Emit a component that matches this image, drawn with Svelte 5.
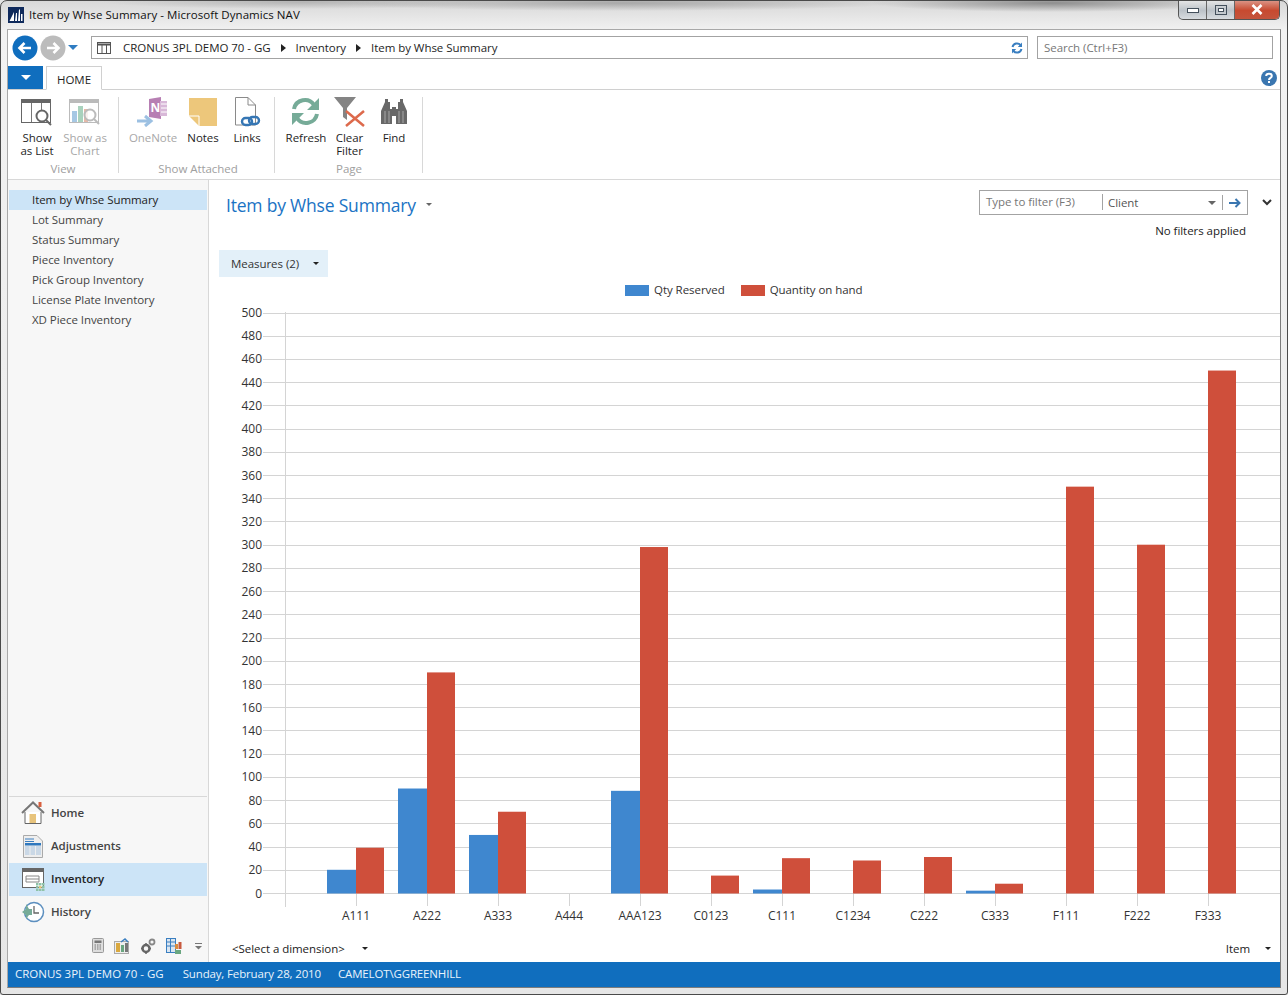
<script>
  const cats = [
    ['A111', 20, 39], ['A222', 90, 190], ['A333', 50, 70], ['A444', 0, 0], ['AAA123', 88, 298],
    ['C0123', 0, 15], ['C111', 3, 30], ['C1234', 0, 28], ['C222', 0, 31], ['C333', 2, 8],
    ['F111', 0, 350], ['F222', 0, 300], ['F333', 0, 450]
  ];
  const ticks = Array.from({ length: 26 }, (_, i) => i * 20);
  const y = (v) => 893 - v * 1.161;
  const cx = (i) => 356 + i * 71;
  const views = ['Item by Whse Summary', 'Lot Summary', 'Status Summary', 'Piece Inventory', 'Pick Group Inventory', 'License Plate Inventory', 'XD Piece Inventory'];
</script>

<div class="window">
  <div class="glass" aria-hidden="true"></div>
  <header class="titlebar">
    <svg class="logo" width="16" height="16" viewBox="0 0 16 16">
      <rect width="16" height="16" fill="#0f2a5c" />
      <path d="M1.500 14 L6 5 V14Z M7 14 L8 6 H9 V14Z M10 14 L11 2.500 H12 V14Z M13 14 V7 H14.500 V14Z" fill="#fff" />
    </svg>
    <span class="title">Item by Whse Summary - Microsoft Dynamics NAV</span>
    <div class="controls">
      <div class="ctl">
        <svg width="14" height="8" viewBox="0 0 14 8"><rect x="1.500" y="2.500" width="11" height="4" fill="#fff" stroke="#44505c" /></svg>
      </div>
      <div class="ctl">
        <svg width="12" height="10" viewBox="0 0 12 10"><rect x="0.500" y="0.500" width="11" height="9" fill="none" stroke="#44505c" /><rect x="3.500" y="3.500" width="5" height="3" fill="#fff" stroke="#44505c" /></svg>
      </div>
      <div class="ctl close">
        <svg width="14" height="11" viewBox="0 0 14 11"><path d="M2.500 1 L11.500 10 M11.500 1 L2.500 10" stroke="#fff" stroke-width="2.600" /></svg>
      </div>
    </div>
  </header>

  <div class="client">
    <div class="navrow">
      <svg class="navbtns" width="70" height="26" viewBox="0 0 70 26">
        <circle cx="13" cy="13" r="12.500" fill="#106ebe" />
        <path d="M19 13 H8 M12.500 8 L7.500 13 L12.500 18" fill="none" stroke="#fff" stroke-width="2.600" />
        <circle cx="41" cy="13" r="12.500" fill="#bcbcbc" />
        <path d="M35 13 H46 M41.500 8 L46.500 13 L41.500 18" fill="none" stroke="#fff" stroke-width="2.600" />
        <path d="M56 10 H66 L61 15Z" fill="#2f7cc2" />
      </svg>
      <div class="address">
        <svg width="14" height="12" viewBox="0 0 14 12"><rect x="0.500" y="0.500" width="13" height="11" fill="#fff" stroke="#555" /><path d="M0 2.500 H14" stroke="#555" stroke-width="2" /><path d="M5 3 V12 M9.500 3 V12" stroke="#555" /></svg>
        <span class="crumb first">CRONUS 3PL DEMO 70 - GG</span>
        <i class="sep"></i>
        <span class="crumb">Inventory</span>
        <i class="sep"></i>
        <span class="crumb">Item by Whse Summary</span>
        <svg class="reload" width="12" height="12" viewBox="0 0 12 12"><path d="M1.500 5 A4.600 4.600 0 0 1 9.600 3.200 M10.500 7 A4.600 4.600 0 0 1 2.400 8.800" fill="none" stroke="#3a7fc1" stroke-width="2" /><path d="M11 0.500 V5 H6.800Z M1 11.500 V7 H5.200Z" fill="#3a7fc1" /></svg>
      </div>
      <div class="search">Search (Ctrl+F3)</div>
    </div>

    <div class="tabrow">
      <div class="appbtn"><i class="tri white"></i></div>
      <div class="tab">HOME</div>
      <svg class="help" width="16" height="16" viewBox="0 0 16 16"><circle cx="8" cy="8" r="8" fill="#3a76b0" /><path d="M5.200 6 C5.200 2.900 10.800 2.900 10.800 6 C10.800 8 8 7.800 8 10" fill="none" stroke="#fff" stroke-width="2" /><rect x="7" y="11" width="2" height="2" fill="#fff" /></svg>
    </div>

    <div class="ribbon">
      <section class="group g1">
        <div class="btns">
          <div class="rb w48">
            <svg width="32" height="30" viewBox="0 0 32 30"><rect x="0.500" y="2.500" width="29" height="23" fill="#fff" stroke="#666" /><rect y="2" width="30" height="4" fill="#666" /><path d="M10.500 6 V25 M20.500 6 V25" stroke="#777" /><circle cx="21" cy="19" r="5.500" fill="#fff" stroke="#666" stroke-width="2" /><path d="M25 23 L30 28" stroke="#666" stroke-width="2" /></svg>
            <span>Show<br />as List</span>
          </div>
          <div class="rb w48 off">
            <svg width="32" height="30" viewBox="0 0 32 30"><rect x="0.500" y="2.500" width="29" height="23" fill="#fff" stroke="#bbb" /><rect y="2" width="30" height="4" fill="#bbb" /><rect x="3" y="14" width="5" height="11" fill="#a6c8e4" /><rect x="9" y="9" width="5" height="16" fill="#a9d2bd" /><rect x="15" y="12" width="4" height="13" fill="#e6b9a8" /><circle cx="21" cy="18" r="5.500" fill="#fff" fill-opacity="0.800" stroke="#bbb" stroke-width="2" /><path d="M25 22 L30 27" stroke="#bbb" stroke-width="2" /></svg>
            <span>Show as<br />Chart</span>
          </div>
        </div>
        <div class="glabel">View</div>
      </section>
      <section class="group g2">
        <div class="btns">
          <div class="rb w52 off">
            <svg width="32" height="30" viewBox="0 0 32 30"><path d="M12 2 L24 0 V22 L12 20Z" fill="#b77fb3" /><rect x="23" y="4" width="7" height="15" fill="#d8b8d8" /><path d="M24 7 H30 M24 11 H30 M24 15 H30" stroke="#fff" /><text class="onenote" x="13.500" y="15">N</text><path d="M0 24 H12 M8 19 L14 24 L8 29" fill="none" stroke="#9cc0e2" stroke-width="3" /></svg>
            <span>OneNote</span>
          </div>
          <div class="rb w48">
            <svg width="32" height="30" viewBox="0 0 32 30"><path d="M2 1 H30 V29 H12 L2 19Z" fill="#edc77b" /><path d="M2 19 H12 V29" fill="none" stroke="#fff" /></svg>
            <span>Notes</span>
          </div>
          <div class="rb w40">
            <svg width="32" height="30" viewBox="0 0 32 30"><path d="M4.500 0.500 H17 L24.500 8 V28 H4.500Z" fill="#fff" stroke="#8a8a8a" /><path d="M17 0.500 V8 H24.500" fill="none" stroke="#8a8a8a" /><rect x="11" y="21" width="10" height="7" rx="3.500" fill="none" stroke="#3576b4" stroke-width="2.400" /><rect x="18" y="20" width="10" height="7" rx="3.500" fill="none" stroke="#3576b4" stroke-width="2.400" /></svg>
            <span>Links</span>
          </div>
        </div>
        <div class="glabel">Show Attached</div>
      </section>
      <section class="group g3">
        <div class="btns">
          <div class="rb w50">
            <svg width="32" height="30" viewBox="0 0 32 30"><path d="M4 12 A11 11 0 0 1 24 8 M27 17 A11 11 0 0 1 7 21" fill="none" stroke="#76ab98" stroke-width="4" /><path d="M29 1 V13 H17Z M2 28 V16 H14Z" fill="#76ab98" /></svg>
            <span>Refresh</span>
          </div>
          <div class="rb w37">
            <svg width="32" height="30" viewBox="0 0 32 30"><path d="M0 0 H22 L13 11 V23 L9 20 V11Z" fill="#848484" /><path d="M12 29 L30 14 M12 14 L30 29" stroke="#dd6a4c" stroke-width="2.500" /></svg>
            <span>Clear<br />Filter</span>
          </div>
          <div class="rb w52">
            <svg width="32" height="30" viewBox="0 0 32 30"><path d="M7 2 H10 V5 H12 V12 H14 V10 H18 V12 H20 V5 H22 V2 H25 V5 L29 14 V27 H18 V19 H14 V27 H3 V14 L7 5Z" fill="#686868" /><path d="M7 14 V26 M25 14 V26 M11 14 V26 M21 14 V26" stroke="#a8a8a8" /></svg>
            <span>Find</span>
          </div>
        </div>
        <div class="glabel">Page</div>
      </section>
    </div>

    <div class="body">
      <aside class="side">
        <ul class="views">
          {#each views as v, i}
            <li class:sel={i === 0}>{v}</li>
          {/each}
        </ul>
        <nav class="areas">
          <div class="area">
            <svg width="24" height="24" viewBox="0 0 24 24"><path d="M1 12 L12 1.500 L23 12" fill="none" stroke="#777" stroke-width="2" /><path d="M4 11 V22.500 H20 V11" fill="#fff" stroke="#666" /><rect x="8.500" y="13" width="6.500" height="9" fill="#e8c47c" /><rect x="17.500" y="1" width="3" height="5" fill="#d8603f" /></svg>
            <span>Home</span>
          </div>
          <div class="area">
            <svg width="24" height="24" viewBox="0 0 24 24"><path d="M2.500 1.500 H16 L21.500 7 V23.500 H2.500Z" fill="#eee" stroke="#aaa" /><path d="M4 5 H13 M4 7.500 H13" stroke="#3a7fc1" /><rect x="4" y="9" width="16" height="2.500" fill="#2f78be" /><rect x="4" y="12" width="4.500" height="9" fill="#cad8e6" /><rect x="9.500" y="12" width="4.500" height="9" fill="#cad8e6" /><rect x="15" y="12" width="5" height="9" fill="#cad8e6" /></svg>
            <span>Adjustments</span>
          </div>
          <div class="area sel">
            <svg width="24" height="24" viewBox="0 0 24 24"><rect x="1.500" y="1.500" width="21" height="19" fill="#fff" stroke="#666" /><rect x="1" y="1" width="22" height="4" fill="#666" /><path d="M5 9 H18 V15 H5Z M5 12 H18" fill="none" stroke="#888" /><g fill="#8fc2a8"><rect x="15" y="16" width="2.500" height="2.500" /><rect x="18" y="16" width="2.500" height="2.500" /><rect x="21" y="16" width="2.500" height="2.500" /><rect x="15" y="19" width="2.500" height="2.500" /><rect x="18" y="19" width="2.500" height="2.500" fill="#e8c47c" /><rect x="21" y="19" width="2.500" height="2.500" /><rect x="15" y="22" width="2.500" height="2" /><rect x="18" y="22" width="2.500" height="2" /><rect x="21" y="22" width="2.500" height="2" /></g></svg>
            <span>Inventory</span>
          </div>
          <div class="area">
            <svg width="24" height="24" viewBox="0 0 24 24"><circle cx="13" cy="12" r="9.500" fill="#fff" stroke="#5c8fbf" stroke-width="1.500" /><path d="M13 6 V13 H18" fill="none" stroke="#666" stroke-width="1.300" /><path d="M5 4 L5 9 L1 12 L5 15 V19 L8 15 H11 V9 H8Z" fill="#76ab98" /></svg>
            <span>History</span>
          </div>
        </nav>
        <div class="tools">
          <svg width="12" height="15" viewBox="0 0 12 15"><rect x="0.500" y="0.500" width="11" height="14" rx="1" fill="#ddd" stroke="#999" /><rect x="2.500" y="2.500" width="7" height="2.500" fill="#777" /><path d="M2.500 7 H9.500 M2.500 9 H9.500 M2.500 11 H9.500" stroke="#777" stroke-dasharray="1.500 1" /></svg>
          <svg width="16" height="16" viewBox="0 0 16 16"><rect x="0.500" y="3.500" width="14" height="12" fill="#eee" stroke="#aaa" /><rect x="2" y="5" width="4" height="9" fill="#d9a83f" /><rect x="7" y="7" width="3" height="7" fill="#6aa680" /><rect x="11" y="5" width="3" height="9" fill="#777" /><path d="M7 4 L11 1 L14 4" fill="none" stroke="#3a7fc1" stroke-width="1.500" /></svg>
          <svg width="16" height="16" viewBox="0 0 16 16"><circle cx="6" cy="10.500" r="3.500" fill="none" stroke="#666" stroke-width="2.500" /><circle cx="12" cy="4" r="2.500" fill="none" stroke="#888" stroke-width="1.800" /><path d="M6 5 V7 M6 14 V16 M1 10.500 H3 M9 10.500 H11" stroke="#666" stroke-width="1.500" /></svg>
          <svg width="16" height="16" viewBox="0 0 16 16"><rect x="0.500" y="0.500" width="9" height="14" fill="#dbe6f1" stroke="#3a7fc1" /><path d="M0 4 H9 M0 8 H9 M4.500 0 V14" stroke="#3a7fc1" /><rect x="9" y="6" width="3" height="5" fill="#d98b3f" /><rect x="12.500" y="4" width="3" height="7" fill="#c85a3f" /><rect x="9" y="12" width="6" height="4" fill="#6aa680" /></svg>
          <svg class="more" width="7" height="8" viewBox="0 0 7 8"><path d="M0 1.500 H7" stroke="#777" /><path d="M0 4 H7 L3.500 7.500Z" fill="#777" /></svg>
        </div>
      </aside>

      <main class="main">
        <div class="head">
          <div class="headrow">
            <h1>Item by Whse Summary</h1>
            <i class="tri gray small"></i>
            <div class="filter">
              <span class="ph">Type to filter (F3)</span>
              <span class="fld">Client</span>
              <i class="tri gray"></i>
              <span class="go">
                <svg width="12" height="10" viewBox="0 0 12 10"><path d="M0 5 H10 M6.500 1 L10.500 5 L6.500 9" fill="none" stroke="#3a76b0" stroke-width="2" /></svg>
              </span>
            </div>
            <svg class="chev" width="10" height="7" viewBox="0 0 10 7"><path d="M1 1 L5 5 L9 1" fill="none" stroke="#333" stroke-width="2" /></svg>
          </div>
          <div class="nofilter">No filters applied</div>
          <div class="measures"><span>Measures (2)</span><i class="tri dark"></i></div>
          <div class="legend">
            <i class="sw blue"></i><span class="lg1">Qty Reserved</span>
            <i class="sw red"></i><span>Quantity on hand</span>
          </div>
        </div>

        <svg class="chart" width="1071" height="635" viewBox="209 300 1071 635">
          {#each ticks as t}
            <line x1="263" x2="1280" y1={Math.round(y(t)) + 0.500} y2={Math.round(y(t)) + 0.500} stroke="#d4d4d4" />
            <text class="axis" x="262" y={y(t) + 4.500} text-anchor="end">{t}</text>
          {/each}
          <line x1="285.500" x2="285.500" y1="312" y2="907" stroke="#d4d4d4" />
          {#each cats as c, i}
            <line x1={cx(i) + 0.500} x2={cx(i) + 0.500} y1="893" y2="906" stroke="#d4d4d4" />
            {#if c[1] > 0}
              <rect class="b" x={cx(i) - 29} y={y(c[1])} width="29" height={893.500 - y(c[1])} />
            {/if}
            {#if c[2] > 0}
              <rect class="r" x={cx(i)} y={y(c[2])} width="28" height={893.500 - y(c[2])} />
            {/if}
            <text class="axis" x={cx(i)} y="920" text-anchor="middle">{c[0]}</text>
          {/each}
        </svg>

        <div class="foot">
          <span class="dim">&lt;Select a dimension&gt;</span>
          <i class="tri dark"></i>
          <span class="item">Item</span>
          <i class="tri dark"></i>
        </div>
      </main>
    </div>

    <footer class="status">
      <span class="co">CRONUS 3PL DEMO 70 - GG</span>
      <span>Sunday, February 28, 2010</span>
      <span class="usr">CAMELOT\GGREENHILL</span>
    </footer>
  </div>
</div>

<style>
  :global(body) { margin: 0; overflow: hidden; background: #e4e4e4; }
  * { box-sizing: border-box; }
  .window {
    position: relative;
    width: 1288px;
    height: 995px;
    display: flex;
    flex-direction: column;
    padding: 0 6px 6px 6px;
    background: linear-gradient(#d8d8d8, #f2f2f2 30px, #e6e6e6);
    border: 1px solid #4a4a4a;
    border-radius: 7px 7px 3px 3px;
    font: 11.500px/16px "Open Sans", "Noto Sans", sans-serif;
    letter-spacing: -0.050px;
    color: #1e1e1e;
    overflow: hidden;
  }
  .glass {
    position: absolute;
    inset: 0 0 auto 0;
    height: 28px;
    background:
      radial-gradient(ellipse 180px 9px at 1050px 2px, #8e8e8e, transparent),
      radial-gradient(ellipse 280px 8px at 620px 2px, #a8a8a8, transparent),
      radial-gradient(ellipse 200px 7px at 300px 1px, #b4b4b4, transparent);
  }
  .titlebar { position: relative; height: 28px; flex: none; display: flex; align-items: center; padding: 0 0 0 1px; }
  .logo { flex: none; }
  .title { margin-left: 5px; color: #111; letter-spacing: 0.050px; }
  .controls {
    position: absolute;
    top: -1px;
    right: 1px;
    display: flex;
    height: 20px;
    border: 1px solid #555;
    border-top: 0;
    border-radius: 0 0 5px 5px;
    overflow: hidden;
    background: linear-gradient(#e8e8e8, #bcc2c8 55%, #d8dce0);
  }
  .ctl { width: 28px; display: flex; align-items: center; justify-content: center; border-right: 1px solid #666; }
  .close { width: 44px; border: 0; background: linear-gradient(#dd9a8c, #c74a30 55%, #c4543c); }

  .client {
    position: relative;
    flex: 1;
    min-height: 0;
    display: flex;
    flex-direction: column;
    background: #fff;
    border: 1px solid #a8a8a8;
    border-right-color: #7c7c7c;
    border-bottom-color: #7c7c7c;
  }
  .navrow { height: 36px; flex: none; display: flex; align-items: center; padding: 0 7px 1px 4px; }
  .navbtns { flex: none; margin-right: 9px; }
  .address, .search {
    height: 23px;
    border: 1px solid #a3a3a3;
    display: flex;
    align-items: center;
  }
  .address { width: 937px; padding-left: 5px; }
  .crumb.first { margin-left: 12px; }
  .sep { width: 0; height: 0; margin: 0 10px; border-left: 5px solid #222; border-top: 4px solid transparent; border-bottom: 4px solid transparent; }
  .reload { margin-left: auto; margin-right: 4px; }
  .search { width: 236px; margin-left: 9px; padding-left: 6px; color: #777; }

  .tabrow { position: relative; height: 24px; flex: none; display: flex; align-items: flex-end; border-bottom: 1px solid #d0d0d0; }
  .appbtn { width: 35px; height: 23px; background: #106ebe; display: flex; align-items: center; justify-content: center; }
  .tab {
    width: 56px;
    height: 24px;
    margin: 0 0 -1px 3px;
    background: #fff;
    border: 1px solid #d0d0d0;
    border-bottom-color: #fff;
    text-align: center;
    line-height: 25px;
  }
  .help { position: absolute; right: 3px; top: 4px; }

  .ribbon { height: 90px; flex: none; display: flex; padding-top: 7px; border-bottom: 1px solid #d8d8d8; }
  .group { height: 76px; display: flex; flex-direction: column; border-right: 1px solid #d8d8d8; }
  .g1 { width: 111px; padding-left: 5px; }
  .g2 { width: 156px; padding-left: 8px; }
  .g3 { width: 148px; padding-left: 6px; }
  .btns { display: flex; height: 64px; flex: none; }
  .rb { display: flex; flex-direction: column; align-items: center; text-align: center; line-height: 13px; }
  .rb svg { display: block; height: 30px; margin-bottom: 4px; }
  .w37 { width: 37px; } .w40 { width: 40px; } .w48 { width: 48px; } .w50 { width: 50px; } .w52 { width: 52px; }
  .off { color: #a8a8a8; }
  .onenote { font: 700 12px "Open Sans", sans-serif; fill: #fff; }
  .glabel { flex: none; text-align: center; color: #a0a0a0; line-height: 14px; margin: 1px 0 -3px; padding-right: 5px; }

  .body { flex: 1; min-height: 0; display: flex; }
  .side { width: 201px; flex: none; display: flex; flex-direction: column; background: #f7f7f7; border-right: 1px solid #d8d8d8; padding: 10px 1px 0 1px; }
  .views { list-style: none; margin: 0; padding: 0; flex: 1; }
  .views li { height: 20px; line-height: 20px; padding-left: 23px; color: #444; }
  .views li.sel { background: #cce4f7; color: #222; }
  .areas { border-top: 1px solid #d8d8d8; }
  .area { height: 33px; display: flex; align-items: center; gap: 6px; padding: 0 0 2px 12px; font-weight: 600; color: #444; }
  .area.sel { background: #cce4f7; color: #222; }
  .tools { height: 33px; display: flex; align-items: center; justify-content: flex-end; gap: 10px; padding: 0 5px 0 0; }
  .more { margin-left: 3px; }

  .main { flex: 1; min-width: 0; display: flex; flex-direction: column; }
  .head { height: 120px; flex: none; position: relative; }
  .headrow { display: flex; align-items: center; height: 44px; padding-left: 17px; }
  h1 { margin: 5px 0 0; font-size: 17.500px; font-weight: 400; color: #1a73c4; letter-spacing: -0.200px; white-space: nowrap; }
  .tri { display: inline-block; width: 0; height: 0; border-top: 4px solid #333; border-left: 4px solid transparent; border-right: 4px solid transparent; }
  .tri.white { border-top: 5px solid #fff; border-left-width: 5px; border-right-width: 5px; }
  .tri.gray { border-top-color: #666; }
  .tri.small { border-width: 3px 3px 0; margin: 4px 0 0 10px; border-top-color: #666; border-left-color: transparent; border-right-color: transparent; }
  .tri.dark { border-width: 3px 3px 0; border-top-color: #222; border-left-color: transparent; border-right-color: transparent; }
  .filter {
    margin-left: auto;
    width: 269px;
    height: 25px;
    display: flex;
    align-items: center;
    border: 1px solid #a3a3a3;
    margin-top: 1px;
  }
  .ph { width: 123px; padding-left: 6px; color: #777; height: 16px; border-right: 1px solid #a3a3a3; margin-top: -1px; }
  .fld { flex: 1; padding-left: 5px; color: #555; }
  .filter .tri { margin-right: 6px; }
  .go { width: 25px; height: 15px; display: flex; align-items: center; justify-content: center; border-left: 1px solid #a3a3a3; }
  .chev { margin: 0 8px 0 14px; flex: none; }
  .nofilter { position: absolute; top: 43px; right: 34px; color: #222; }
  .measures {
    position: absolute;
    left: 10px;
    top: 70px;
    width: 109px;
    height: 27px;
    display: flex;
    align-items: center;
    justify-content: space-between;
    padding: 0 9px 0 12px;
    background: #e3f0f9;
    color: #333;
  }
  .legend { position: absolute; left: 416px; top: 102px; display: flex; align-items: center; color: #333; }
  .sw { width: 24px; height: 11px; margin-right: 5px; }
  .blue { background: #3f87cf; }
  .red { background: #cf4f3b; }
  .lg1 { margin-right: 16px; }
  .chart { display: block; flex: none; }
  .axis { font: 12px "Open Sans", "Noto Sans", sans-serif; fill: #333; }
  .b { fill: #3f87cf; }
  .r { fill: #cf4f3b; }
  .foot { flex: 1; display: flex; align-items: center; padding: 0 9px 0 23px; color: #222; }
  .dim { margin-right: 17px; }
  .item { margin-left: auto; margin-right: 15px; }
  .status { height: 25px; flex: none; background: #106ebe; display: flex; align-items: center; gap: 19px; padding: 0 0 1px 7px; letter-spacing: -0.150px; }
  .status span { color: #eaf3fb; }
  .status .co { letter-spacing: 0; }
  .status .usr { margin-left: -2px; }
</style>
